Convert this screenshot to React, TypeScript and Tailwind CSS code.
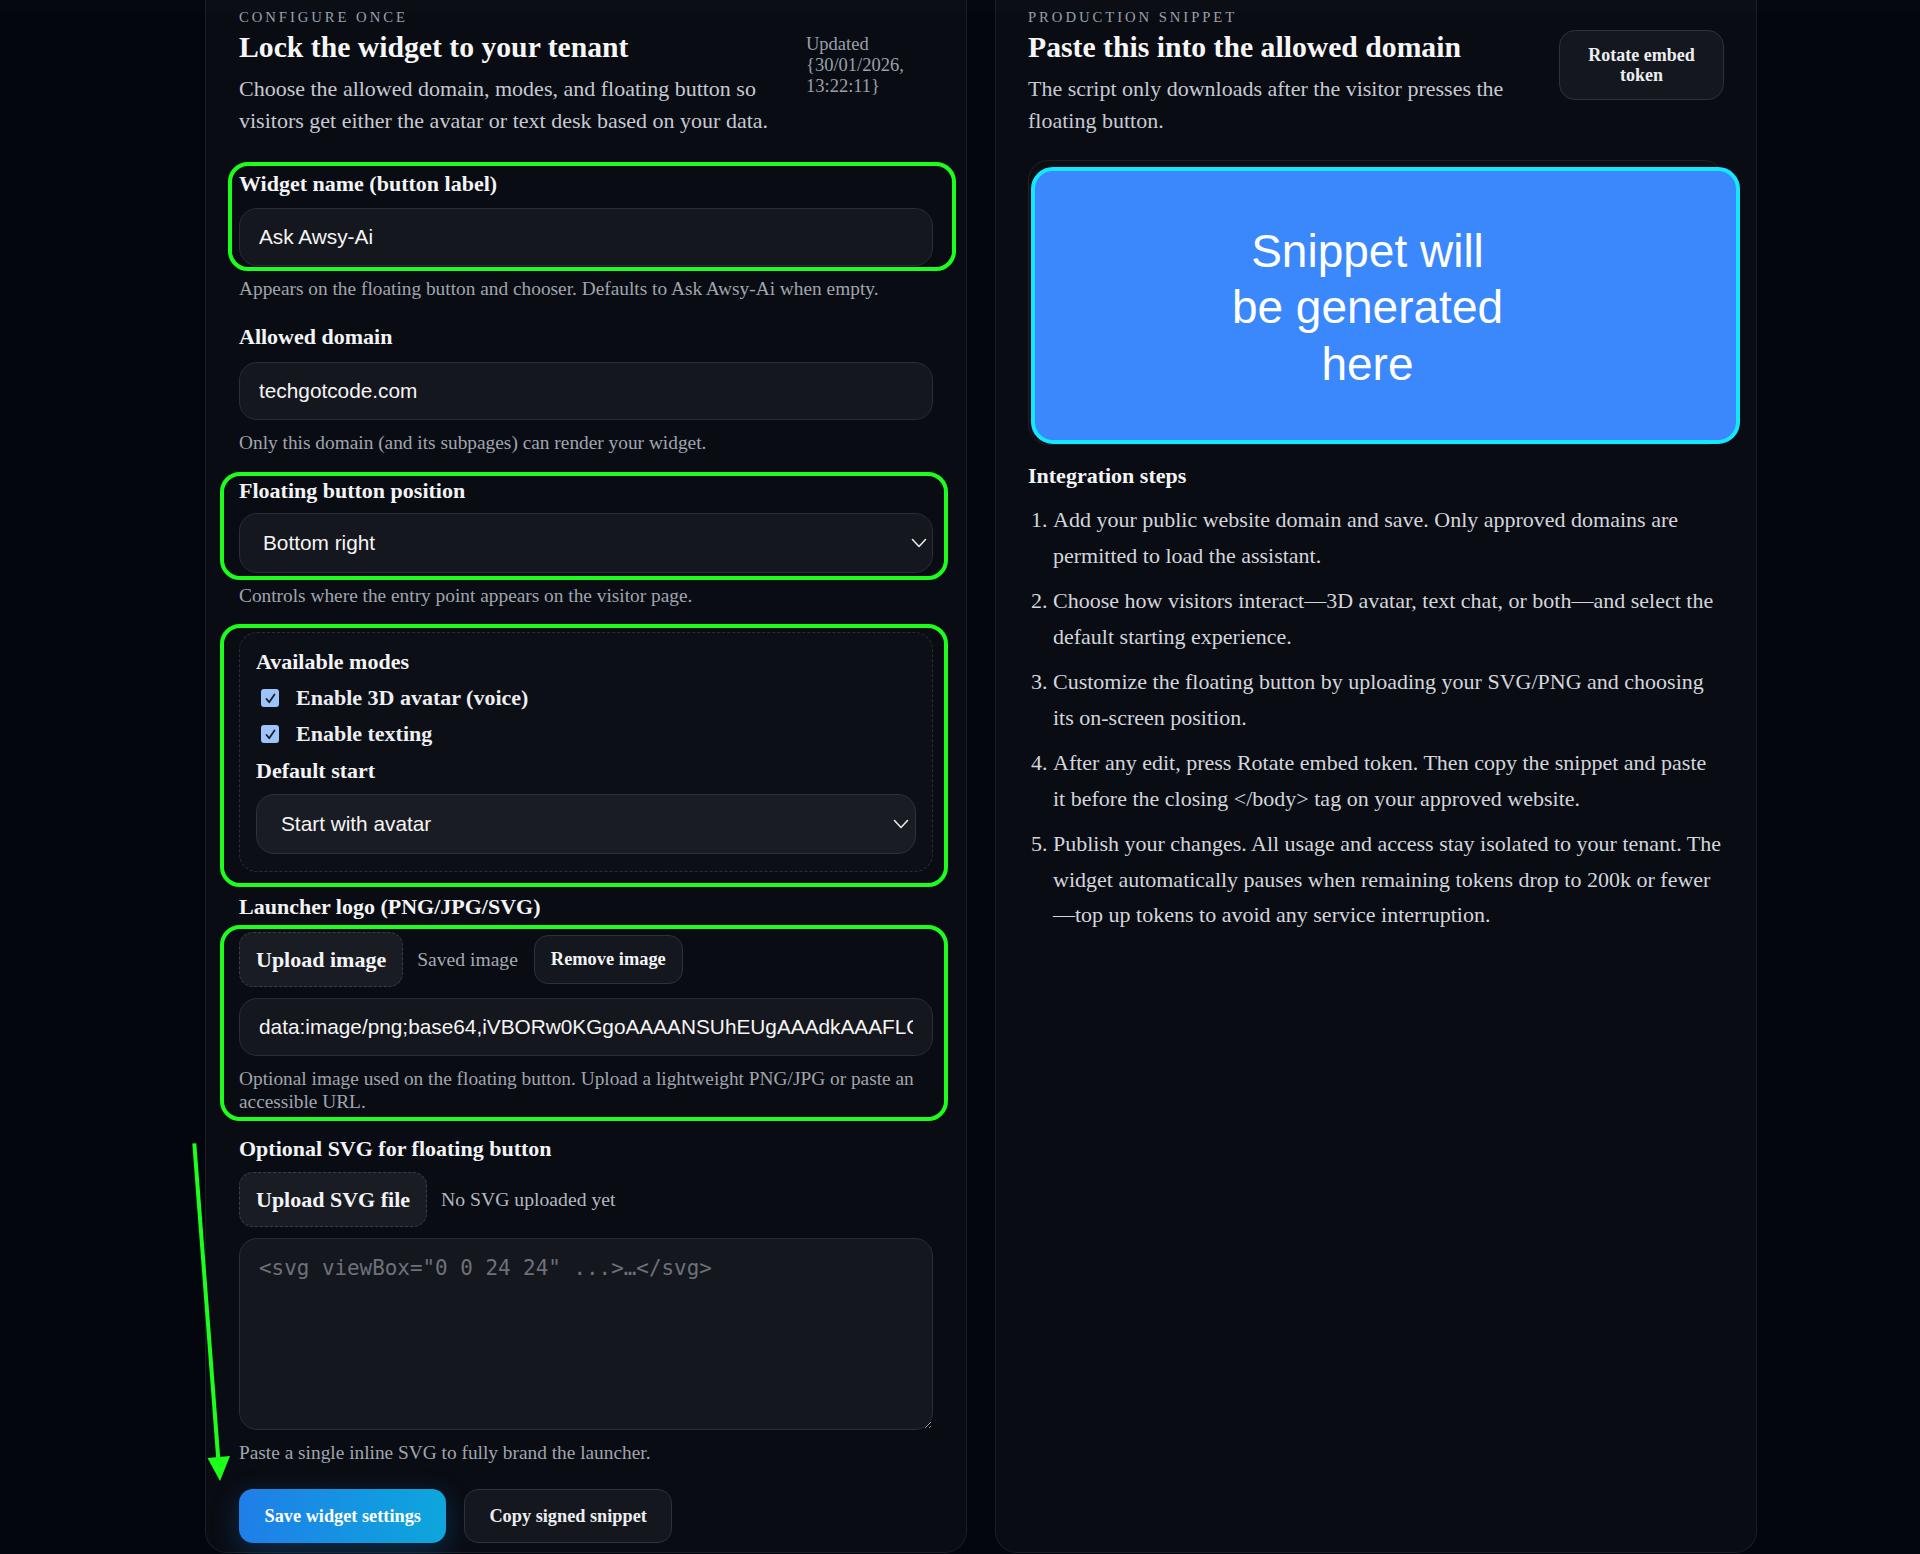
import React from "react";

function Chevron() {
  return (
    <svg width="16" height="10" viewBox="0 0 16 10" fill="none" className="shrink-0">
      <polyline points="1.5,1.5 8,8.5 14.5,1.5" stroke="#e5e7eb" strokeWidth="1.6" strokeLinecap="round" strokeLinejoin="round" />
    </svg>
  );
}

function Check() {
  return (
    <span className="ml-[5px] flex h-[18px] w-[18px] shrink-0 items-center justify-center rounded-[3px] bg-[#9cc4fb]">
      <svg width="13" height="13" viewBox="0 0 13 13" fill="none">
        <polyline points="2.5,7 5.2,10.2 10.5,2.5" stroke="#1a1d26" strokeWidth="1.8" strokeLinecap="round" strokeLinejoin="round" />
      </svg>
    </span>
  );
}

export default function App() {
  return (
    <div className="relative min-h-[1554px] w-full overflow-hidden bg-[#03060d] font-['Liberation_Serif',serif] text-[#e5e7eb] scheme-dark">
      <div className="flex items-stretch gap-[28px] pl-[205px] pr-[162px]">
        {/* LEFT PANEL */}
        <section className="flex w-[762px] shrink-0 flex-col rounded-b-[22px] border-x border-b border-[#1b1e26] bg-[#0a0c13] px-[33px] pb-[9px] pt-[7px]">
          <p className="text-[14.7px] uppercase leading-[20px] tracking-[0.2em] text-[#9aa0ab]">Configure once</p>
          <div className="mt-[2px] flex items-start gap-6">
            <div className="min-w-0 flex-1">
              <h2 className="text-[29.7px] font-bold leading-[36px] text-[#f7f7f8]">Lock the widget to your tenant</h2>
              <p className="mt-[8px] text-[22px] leading-[32px] text-[#c6cad2]">
                Choose the allowed domain, modes, and floating button so visitors get either the avatar or text desk based on your data.
              </p>
            </div>
            <div className="mt-[4.5px] w-[127px] shrink-0 text-[18.5px] leading-[21px] text-[#9aa0ab]">
              Updated {"{30/01/2026, 13:22:11}"}
            </div>
          </div>

          {/* Widget name */}
          <div className="relative mt-[34px]">
            <label className="block text-[22px] font-bold leading-[26px] text-[#f3f4f6]">Widget name (button label)</label>
            <input
              readOnly
              value="Ask Awsy-Ai"
              className="mt-[11px] block h-[58px] w-full rounded-[18px] border border-[#2a2d36] bg-[#15171e] px-[19px] font-['Liberation_Sans',Arial,sans-serif] text-[20.8px] text-[#f5f5f5] outline-none"
            />
            <span className="pointer-events-none absolute -bottom-[5px] -left-[11px] -right-[23px] -top-[9px] rounded-[20px] border-4 border-[#1cff1c]" />
          </div>
          <p className="mt-[12px] text-[19.35px] leading-[22px] text-[#a0a5ae]">
            Appears on the floating button and chooser. Defaults to Ask Awsy-Ai when empty.
          </p>

          {/* Allowed domain */}
          <label className="mt-[24px] block text-[22px] font-bold leading-[26px] text-[#f3f4f6]">Allowed domain</label>
          <input
            readOnly
            value="techgotcode.com"
            className="mt-[12px] block h-[58px] w-full rounded-[18px] border border-[#2a2d36] bg-[#15171e] px-[19px] font-['Liberation_Sans',Arial,sans-serif] text-[20.8px] text-[#f5f5f5] outline-none"
          />
          <p className="mt-[12px] text-[19.35px] leading-[22px] text-[#a0a5ae]">Only this domain (and its subpages) can render your widget.</p>

          {/* Floating button position */}
          <div className="relative mt-[24px]">
            <label className="block text-[22px] font-bold leading-[26px] text-[#f3f4f6]">Floating button position</label>
            <div className="mt-[9px] flex h-[60px] w-full items-center justify-between rounded-[18px] border border-[#2a2d36] bg-[#15171e] pl-[23px] pr-[5px] font-['Liberation_Sans',Arial,sans-serif] text-[20.8px] text-[#f5f5f5]">
              <span>Bottom right</span>
              <Chevron />
            </div>
            <span className="pointer-events-none absolute -bottom-[7px] -left-[19px] -right-[15px] -top-[6px] rounded-[20px] border-4 border-[#1cff1c]" />
          </div>
          <p className="mt-[12px] text-[19.35px] leading-[22px] text-[#a0a5ae]">Controls where the entry point appears on the visitor page.</p>

          {/* Modes */}
          <div className="relative mt-[25px]">
            <div className="rounded-[18px] border border-dashed border-[#2a2d36] bg-[#0d0f16] px-[16px] pb-[17px] pt-[16px]">
              <p className="text-[22px] font-bold leading-[26px] text-[#f3f4f6]">Available modes</p>
              <div className="mt-[10px] flex items-center gap-[17px]">
                <Check />
                <span className="text-[22px] font-bold leading-[26px] text-[#eceef1]">Enable 3D avatar (voice)</span>
              </div>
              <div className="mt-[10px] flex items-center gap-[17px]">
                <Check />
                <span className="text-[22px] font-bold leading-[26px] text-[#eceef1]">Enable texting</span>
              </div>
              <p className="mt-[11px] text-[22px] font-bold leading-[26px] text-[#f3f4f6]">Default start</p>
              <div className="mt-[10px] flex h-[60px] w-full items-center justify-between rounded-[18px] border border-[#2e313a] bg-[#1a1c23] pl-[24px] pr-[6px] font-['Liberation_Sans',Arial,sans-serif] text-[20.8px] text-[#f5f5f5]">
                <span>Start with avatar</span>
                <Chevron />
              </div>
            </div>
            <span className="pointer-events-none absolute -bottom-[15px] -left-[19px] -right-[15px] -top-[8px] rounded-[20px] border-4 border-[#1cff1c]" />
          </div>

          {/* Launcher logo */}
          <label className="mt-[22px] block text-[22px] font-bold leading-[26px] text-[#f3f4f6]">Launcher logo (PNG/JPG/SVG)</label>
          <div className="relative mt-[12px]">
            <div className="flex items-center gap-[14px]">
              <button className="h-[55px] rounded-[14px] border border-dashed border-[#3a3d46] bg-[#1a1c23] px-[16px] text-[22px] font-bold text-[#f3f4f6]">Upload image</button>
              <span className="text-[19.6px] text-[#a4a9b2]">Saved image</span>
              <button className="ml-[2px] h-[49px] rounded-[14px] border border-[#2e313a] bg-[#15171e] px-[16px] text-[18.4px] font-bold text-[#f3f4f6]">Remove image</button>
            </div>
            <input
              readOnly
              value="data:image/png;base64,iVBORw0KGgoAAAANSUhEUgAAAdkAAAFLCAYAAABr3d8WAAAACXBIWXMAAAsTAAALEwEAmpwYAAAAAXNSR0IArs4c6QAAAARnQU1BAACxjwv8YQUAAB"
              className="mt-[11px] block h-[58px] w-full rounded-[18px] border border-[#2a2d36] bg-[#15171e] px-[19px] font-['Liberation_Sans',Arial,sans-serif] text-[20.8px] text-[#f5f5f5] outline-none"
            />
            <p className="mt-[12px] text-[19.35px] leading-[22.7px] text-[#a0a5ae]">
              Optional image used on the floating button. Upload a lightweight PNG/JPG or paste an accessible URL.
            </p>
            <span className="pointer-events-none absolute -bottom-[8px] -left-[19px] -right-[15px] -top-[7px] rounded-[20px] border-4 border-[#1cff1c]" />
          </div>

          {/* Optional SVG */}
          <label className="mt-[23px] block text-[22px] font-bold leading-[26px] text-[#f3f4f6]">Optional SVG for floating button</label>
          <div className="mt-[10px] flex items-center gap-[14px]">
            <button className="h-[55px] rounded-[14px] border border-dashed border-[#3a3d46] bg-[#1a1c23] px-[16px] text-[22px] font-bold text-[#f3f4f6]">Upload SVG file</button>
            <span className="text-[19.7px] text-[#b4b8c0]">No SVG uploaded yet</span>
          </div>
          <textarea
            placeholder={'<svg viewBox="0 0 24 24" ...>…</svg>'}
            className="mt-[11px] block h-[192px] w-full rounded-[18px] border border-[#2a2d36] bg-[#15171e] px-[19px] py-[16px] font-['DejaVu_Sans_Mono',monospace] text-[20.9px] leading-[26px] text-[#f5f5f5] outline-none placeholder:text-[#6d717a]"
          />
          <p className="mt-[12px] text-[19.35px] leading-[22px] text-[#a0a5ae]">Paste a single inline SVG to fully brand the launcher.</p>

          <div className="mt-[25px] flex items-center gap-[18px]">
            <button className="h-[54px] rounded-[14px] bg-linear-to-r from-[#1f7ee8] to-[#0ea6dc] px-[25.5px] text-[18.3px] font-bold text-white shadow-[0_8px_28px_rgba(14,140,230,0.28)]">
              Save widget settings
            </button>
            <button className="h-[54px] rounded-[14px] border border-[#2e313a] bg-[#15171e] px-[24px] text-[18.3px] font-bold text-[#eceef1]">
              Copy signed snippet
            </button>
          </div>
        </section>

        {/* RIGHT PANEL */}
        <section className="flex w-[762px] shrink-0 flex-col rounded-b-[22px] border-x border-b border-[#1b1e26] bg-[#0a0c13] px-[32px] pb-[9px] pt-[7px]">
          <p className="text-[14.7px] uppercase leading-[20px] tracking-[0.2em] text-[#9aa0ab]">Production snippet</p>
          <div className="mt-[2px] flex items-start gap-6">
            <div className="min-w-0 flex-1">
              <h2 className="text-[29.7px] font-bold leading-[36px] text-[#f7f7f8]">Paste this into the allowed domain</h2>
              <p className="mt-[8px] text-[22px] leading-[32px] text-[#c6cad2]">
                The script only downloads after the visitor presses the floating button.
              </p>
            </div>
            <button className="mt-[1px] w-[165px] shrink-0 rounded-[16px] border border-[#2e313a] bg-[#15171e] px-[12px] py-[14px] text-center text-[18px] font-bold leading-[20px] text-[#eceef1]">
              Rotate embed token
            </button>
          </div>

          <div className="relative mt-[23px] h-[285px] rounded-[20px] border border-[#1d2029] bg-[#0c0e15]">
            <div className="absolute -right-[17px] bottom-0 left-[2px] top-[6px] flex items-center justify-center rounded-[22px] border-4 border-[#14e8ff] bg-[#3b88fd] pr-[36px] pt-[4px]">
              <p className="w-[285px] text-center font-['Liberation_Sans',Arial,sans-serif] text-[46px] leading-[56.5px] text-white">
                Snippet will be generated here
              </p>
            </div>
          </div>

          <h3 className="mt-[18px] text-[22px] font-bold leading-[26px] text-[#f3f4f6]">Integration steps</h3>
          <ol className="mt-[13px] list-decimal space-y-[10px] pl-[25px] text-[22px] leading-[35.5px] text-[#d3d6dc]">
            <li>Add your public website domain and save. Only approved domains are permitted to load the assistant.</li>
            <li>Choose how visitors interact—3D avatar, text chat, or both—and select the default starting experience.</li>
            <li>Customize the floating button by uploading your SVG/PNG and choosing its on-screen position.</li>
            <li>After any edit, press Rotate embed token. Then copy the snippet and paste it before the closing &lt;/body&gt; tag on your approved website.</li>
            <li>
              Publish your changes. All usage and access stay isolated to your tenant. The widget automatically pauses when remaining tokens drop to 200k or fewer—top up tokens to avoid any service interruption.
            </li>
          </ol>
        </section>
      </div>

      {/* faint top band */}
      <div className="pointer-events-none absolute inset-x-0 top-0 h-[11px] bg-[#ffffff03]" />

      {/* annotation arrow */}
      <svg className="pointer-events-none absolute left-[180px] top-[1130px]" width="60" height="370" viewBox="0 0 60 370" fill="none">
        <line x1="14.3" y1="13.3" x2="38.5" y2="332" stroke="#1cff1c" strokeWidth="4" />
        <polygon points="27.5,328 50,326 40,351" fill="#1cff1c" />
      </svg>
    </div>
  );
}
